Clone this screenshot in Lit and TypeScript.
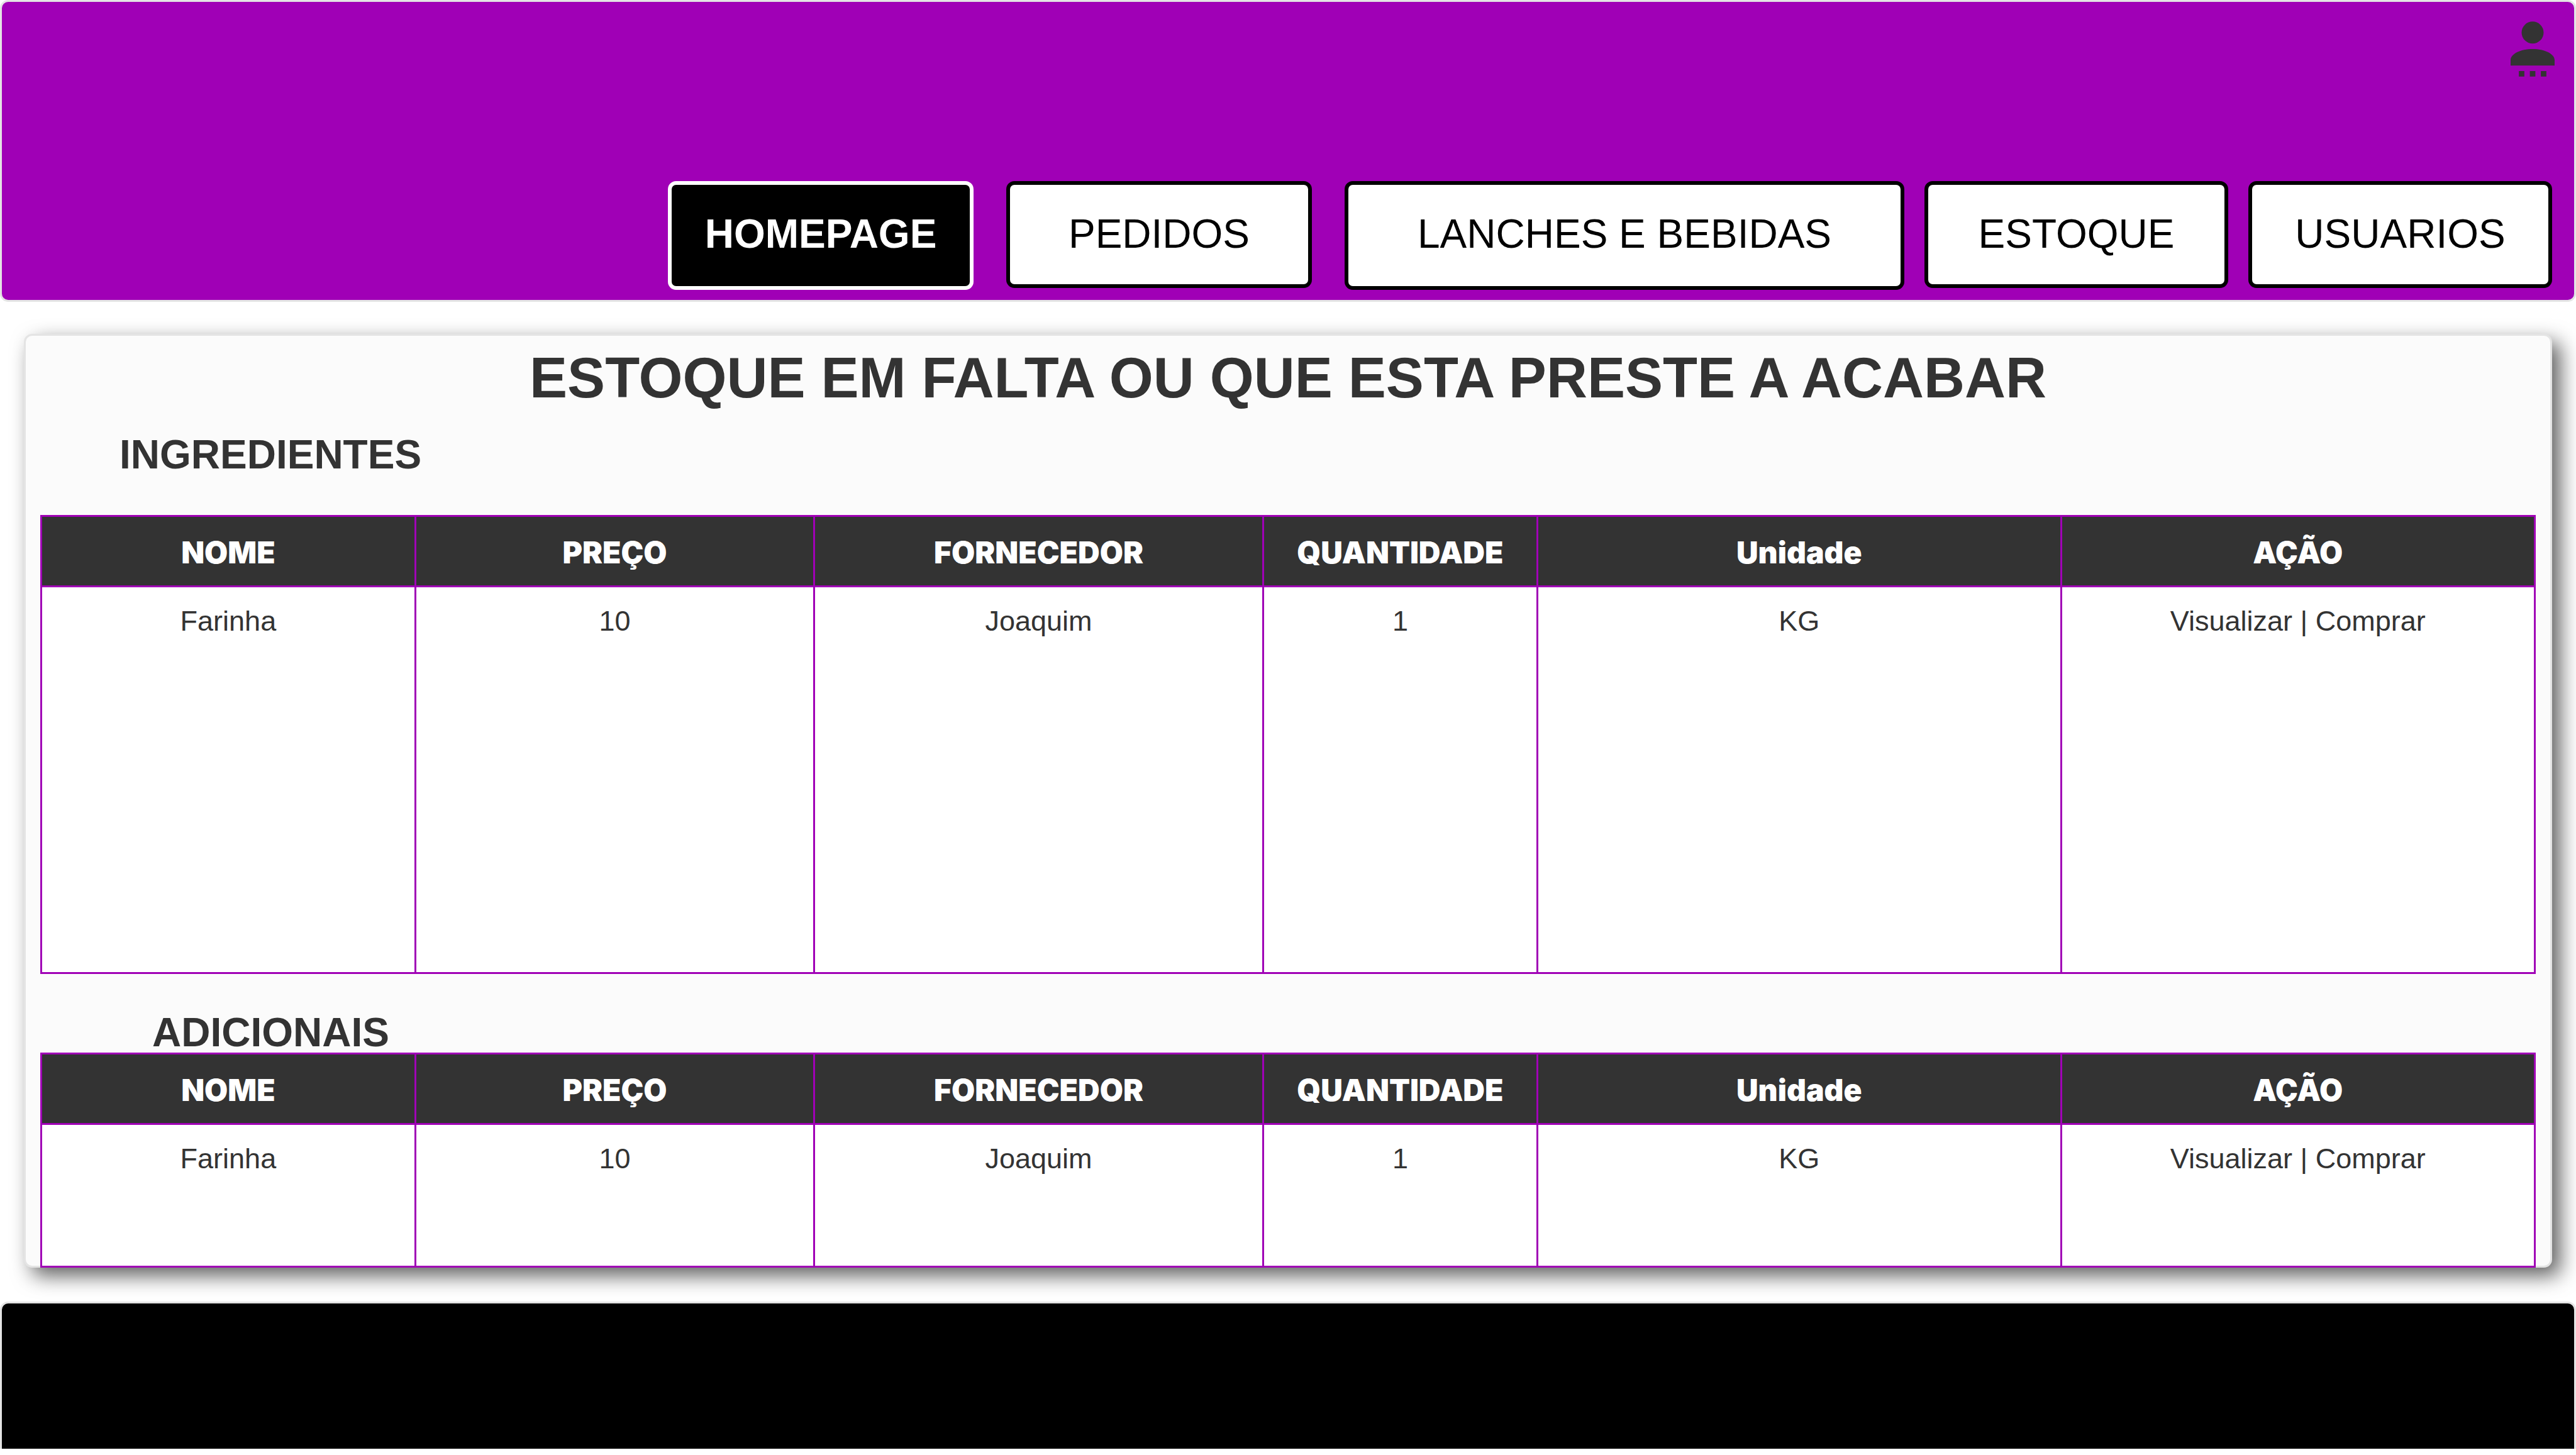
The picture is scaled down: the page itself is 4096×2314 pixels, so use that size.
import { LitElement, html, css } from "lit";
import { customElement, property } from "lit/decorators.js";
import { classMap } from "lit/directives/class-map.js";

interface StockItem {
  nome: string;
  preco: number;
  fornecedor: string;
  quantidade: number;
  unidade: string;
}

interface NavItem {
  label: string;
  href: string;
  size: "regular" | "wide" | "compact";
  tall?: boolean;
  active?: boolean;
}

const NAV: NavItem[] = [
  { label: "HOMEPAGE", href: "#homepage", size: "regular", tall: true, active: true },
  { label: "PEDIDOS", href: "#pedidos", size: "regular" },
  { label: "LANCHES E BEBIDAS", href: "#lanches", size: "wide", tall: true },
  { label: "ESTOQUE", href: "#estoque", size: "compact" },
  { label: "USUARIOS", href: "#usuarios", size: "compact" },
];

const STOCK: StockItem[] = [
  { nome: "Farinha", preco: 10, fornecedor: "Joaquim", quantidade: 1, unidade: "KG" },
];

@customElement("stock-table")
export class StockTable extends LitElement {
  @property({ attribute: false }) items: StockItem[] = [];
  @property() label = "";

  static styles = css`
    :host {
      display: block;
    }
    .table {
      width: 100%;
      height: 100%;
      table-layout: fixed;
      border-collapse: collapse;
      color: #333;
      background: #fff;
      font: 45px/52px "Liberation Sans", Arial, sans-serif;
      text-align: center;
    }
    .w-nome { width: 15%; }
    .w-preco { width: 16%; }
    .w-fornecedor { width: 18%; }
    .w-quantidade { width: 11%; }
    .w-unidade { width: 21%; }
    .w-acao { width: 19%; }
    .head,
    .cell {
      border: 3px solid #a000b6;
    }
    .head {
      height: 105px;
      padding: 4px 0 0;
      color: #fff;
      background: #333;
      font: 900 48px/52px Inter, "Liberation Sans", sans-serif;
    }
    .cell {
      padding: 28px 0 0;
      vertical-align: top;
    }
    .action {
      color: inherit;
      text-decoration: none;
    }
  `;

  render() {
    return html`
      <table class="table" aria-label=${this.label}>
        <colgroup>
          <col class="w-nome" />
          <col class="w-preco" />
          <col class="w-fornecedor" />
          <col class="w-quantidade" />
          <col class="w-unidade" />
          <col class="w-acao" />
        </colgroup>
        <thead>
          <tr>
            ${["NOME", "PREÇO", "FORNECEDOR", "QUANTIDADE", "Unidade", "AÇÃO"].map(
              (title) => html`<th class="head" scope="col">${title}</th>`
            )}
          </tr>
        </thead>
        <tbody>
          ${this.items.map(
            (item) => html`
              <tr>
                <td class="cell">${item.nome}</td>
                <td class="cell">${item.preco}</td>
                <td class="cell">${item.fornecedor}</td>
                <td class="cell">${item.quantidade}</td>
                <td class="cell">${item.unidade}</td>
                <td class="cell">
                  <a class="action" href="#visualizar">Visualizar</a> |
                  <a class="action" href="#comprar">Comprar</a>
                </td>
              </tr>
            `
          )}
        </tbody>
      </table>
    `;
  }
}

@customElement("app-root")
export class AppRoot extends LitElement {
  static styles = css`
    :host {
      display: block;
      background: #fff;
      color: #333;
      font-family: "Liberation Sans", Arial, sans-serif;
    }
    .header {
      box-sizing: border-box;
      display: flex;
      flex-direction: column;
      justify-content: space-between;
      align-items: flex-end;
      min-height: 480px;
      padding: 31px 31px 16px;
      border: 3px solid #e4e4e4;
      border-radius: 13px;
      background: #a000b6;
    }
    .user {
      display: block;
      padding: 0;
      border: 0;
      background: none;
      color: #333;
      cursor: pointer;
    }
    .user-icon {
      display: block;
      width: 70px;
      height: 88px;
      fill: currentColor;
    }
    .nav {
      display: flex;
      align-items: flex-start;
      gap: 32px;
      padding-right: 4px;
    }
    .tab {
      box-sizing: border-box;
      min-width: 486px;
      padding: 41px 16px 43px;
      border: 6px solid #000;
      border-radius: 13px;
      background: #fff;
      color: #000;
      font-size: 64px;
      line-height: 74px;
      text-align: center;
      text-decoration: none;
      white-space: nowrap;
    }
    .regular {
      margin-right: 20px;
    }
    .wide {
      min-width: 890px;
    }
    .compact {
      min-width: 483px;
    }
    .tall {
      padding-bottom: 46px;
    }
    .active {
      border-color: #fff;
      background: #000;
      color: #fff;
      font-weight: bold;
    }
    .card {
      margin: 51px 38px 54px;
      padding: 15px 23px 0;
      border: 3px solid #e4e4e4;
      border-radius: 13px;
      background: #fbfbfb;
      box-shadow: 13px 13px 32px #606060;
    }
    .title {
      margin: 0 0 38px;
      font-size: 90px;
      line-height: 104px;
      text-align: center;
    }
    .section {
      margin: 0;
      font-size: 64px;
      line-height: 64px;
    }
    .ingredientes {
      padding: 0 0 64px 126px;
    }
    .adicionais {
      padding: 61px 0 0 178px;
    }
    .long {
      height: 730px;
    }
    .short {
      height: 342px;
      margin-bottom: -3px;
    }
    .footer {
      box-sizing: border-box;
      height: 234px;
      border: 3px solid #e4e4e4;
      border-bottom: 0;
      border-radius: 13px 13px 0 0;
      background: #000;
    }
  `;

  render() {
    return html`
      <header class="header">
        <button class="user" type="button" aria-label="Conta do usuário">
          <svg class="user-icon" viewBox="0 0 16 20" aria-hidden="true">
            <path
              d="M8 0a4 4 0 1 1 0 8 4 4 0 0 1 0-8zM8 10c4.42 0 8 1.79 8 4v2H0v-2c0-2.21 3.58-4 8-4zM3 18h2v2H3zM7 18h2v2H7zM11 18h2v2h-2z"
            />
          </svg>
        </button>
        <nav class="nav">
          ${NAV.map(
            (item) => html`<a
              class=${classMap({
                tab: true,
                [item.size]: true,
                tall: !!item.tall,
                active: !!item.active,
              })}
              href=${item.href}
              >${item.label}</a
            >`
          )}
        </nav>
      </header>
      <main class="card">
        <h1 class="title">ESTOQUE EM FALTA OU QUE ESTA PRESTE A ACABAR</h1>
        <h2 class="section ingredientes">INGREDIENTES</h2>
        <stock-table class="long" label="Ingredientes" .items=${STOCK}></stock-table>
        <h2 class="section adicionais">ADICIONAIS</h2>
        <stock-table class="short" label="Adicionais" .items=${STOCK}></stock-table>
      </main>
      <footer class="footer"></footer>
    `;
  }
}
